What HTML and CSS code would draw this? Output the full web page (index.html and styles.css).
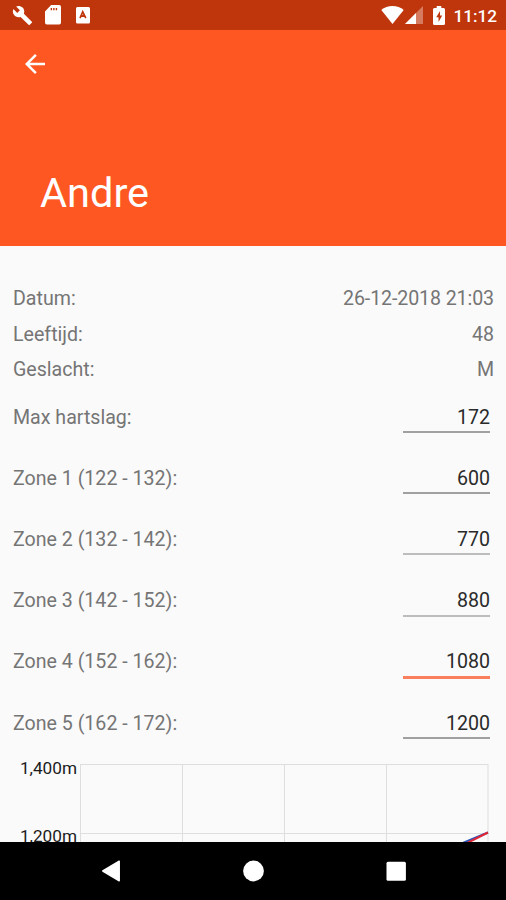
FILE: index.html
```html
<!DOCTYPE html>
<html lang="nl">
<head>
  <meta charset="UTF-8" />
  <title>Andre</title>
  <meta name="viewport" content="width=device-width, initial-scale=1" />
  <link rel="stylesheet" href="styles.css">
</head>
<body>
  <div class="status-bar">
    <svg class="icon-wrench" width="21" height="21" viewBox="0 0 24 24"><path d="M22.7 19l-9.1-9.1c.9-2.3.4-5-1.5-6.9-2-2-5-2.4-7.4-1.3L9 6 6 9 1.6 4.7C.4 7.1.9 10.1 2.9 12.1c1.9 1.9 4.6 2.4 6.9 1.5l9.1 9.1c.4.4 1 .4 1.4 0l2.3-2.3c.5-.4.5-1.1.1-1.4z"/></svg>
    <svg class="icon-card" width="16" height="20" viewBox="0 0 17 20" preserveAspectRatio="none"><path fill-rule="evenodd" d="M6.500 0H15a2 2 0 0 1 2 2v15.500a2 2 0 0 1-2 2H2a2 2 0 0 1-2-2V6.500zM6 3v2.200h1.500V3zm2.700 0v2.200h1.500V3zm2.700 0v2.200h1.500V3z"/></svg>
    <svg class="icon-app" width="14" height="17" viewBox="0 0 15 17" preserveAspectRatio="none"><rect width="15" height="16.500" rx="1.500"/><path class="cut" d="M4.300 11.200L7.200 4.800l3.300 6.400M5.500 9h3.700"/></svg>
    <div class="status-right">
      <svg class="icon-wifi" width="23" height="18" viewBox="0 0 24 18" preserveAspectRatio="none"><path d="M12 18L.3 3.900C3.500 1.400 7.500 0 12 0s8.500 1.400 11.700 3.900z"/></svg>
      <svg class="icon-signal" width="18" height="18" viewBox="0 0 18 18"><path d="M0 18L18 0v18z" opacity=".35"/><path d="M0 18L11 7v11z"/></svg>
      <svg class="icon-battery" width="12" height="19" viewBox="0 0 13 19" preserveAspectRatio="none"><path fill-rule="evenodd" d="M4 0h5v2h2.500A1.500 1.500 0 0 1 13 3.500v14a1.500 1.500 0 0 1-1.500 1.500h-10A1.500 1.500 0 0 1 0 17.500v-14A1.500 1.500 0 0 1 1.500 2H4zM7.600 5L3.500 11.300H6V16l4-6.400H7.600z"/></svg>
      <span class="clock">11:12</span>
    </div>
  </div>

  <header class="header">
    <svg class="back" width="30" height="30" viewBox="0 0 24 24"><path d="M20 11H7.830l5.590-5.590L12 4l-8 8 8 8 1.410-1.410L7.830 13H20z"/></svg>
    <h1>Andre</h1>
  </header>

  <main class="content">
    <div class="info-row"><span>Datum:</span><span class="date">26-12-2018 21:03</span></div>
    <div class="info-row"><span>Leeftijd:</span><span>48</span></div>
    <div class="info-row"><span>Geslacht:</span><span>M</span></div>

    <div class="edit-row"><label for="max">Max hartslag:</label><input type="text" id="max" value="172" /></div>
    <div class="edit-row"><label for="zone1">Zone 1 (122 - 132):</label><input type="text" id="zone1" value="600" /></div>
    <div class="edit-row"><label for="zone2">Zone 2 (132 - 142):</label><input type="text" id="zone2" class="light" value="770" /></div>
    <div class="edit-row"><label for="zone3">Zone 3 (142 - 152):</label><input type="text" id="zone3" class="light" value="880" /></div>
    <div class="edit-row"><label for="zone4">Zone 4 (152 - 162):</label><input type="text" id="zone4" class="active" value="1080" /></div>
    <div class="edit-row"><label for="zone5">Zone 5 (162 - 172):</label><input type="text" id="zone5" value="1200" /></div>

    <svg class="chart" width="506" height="342" viewBox="0 0 506 342">
      <g class="grid">
        <path d="M80 10.500H488M80 79.500H488"/>
        <path d="M80.500 10V342M182.500 10V342M284.500 10V342M386.500 10V342M488 10V342"/>
      </g>
      <text x="77" y="19.500">1,400m</text>
      <text x="77" y="88">1,200m</text>
      <path class="line-blue" d="M488 78.500L464 88.500L386 126"/>
      <path class="line-red" d="M488 78.500L386 130"/>
    </svg>
  </main>

  <nav class="nav-bar">
    <svg width="22" height="24" viewBox="0 0 22 24"><path d="M18.200 2.200v19.600L1.800 12z" stroke="#fff" stroke-width="1.500" stroke-linejoin="round"/></svg>
    <svg width="22" height="24" viewBox="0 0 22 24"><circle cx="10.500" cy="12" r="10.400"/></svg>
    <svg width="22" height="24" viewBox="0 0 22 24"><rect x="1.500" y="2.800" width="19.400" height="19" rx="1.500"/></svg>
  </nav>
</body>
</html>
```

FILE: styles.css
```css
:root {
  --bg: #fafafa;
  --primary: #ff5722;
  --primary-dark: #bf360c;
  --label: #757575;
  --text: #2a2a2a;
}

* { box-sizing: border-box; }

body {
  font-family: Roboto, sans-serif;
  margin: 0;
  height: 900px;
  overflow: hidden;
  display: flex;
  flex-direction: column;
  background-color: var(--bg);
  color: var(--text);
  font-size: 19.6px;
}

svg {
  display: block;
  flex: none;
  fill: #fff;
}

.status-bar {
  flex: none;
  height: 30px;
  padding: 0 9px 0 12px;
  display: flex;
  align-items: center;
  background-color: var(--primary-dark);
}

.icon-card { margin-left: 12px; }
.icon-app { margin-left: 15px; }

.cut {
  fill: none;
  stroke: var(--primary-dark);
  stroke-width: 1.8;
}

.status-right {
  margin-left: auto;
  display: flex;
  align-items: center;
}

.icon-signal { margin-left: 1px; }
.icon-battery { margin-left: 10px; }

.clock {
  margin-left: 8px;
  color: #fff;
  font-size: 17.2px;
  font-weight: 500;
  line-height: 30px;
  padding-top: 1px;
}

.header {
  flex: none;
  height: 216px;
  padding: 19px 20px 0;
  background-color: var(--primary);
  color: #fff;
}

.header h1 {
  margin: 89px 0 0 20px;
  font-size: 41.5px;
  font-weight: 400;
  line-height: 50px;
}

.content {
  flex: 1;
  min-height: 0;
  overflow: hidden;
  padding-top: 34px;
}

.info-row,
.edit-row {
  display: flex;
  justify-content: space-between;
  align-items: center;
  padding: 0 12px 0 13px;
  color: var(--label);
}

.info-row {
  height: 35.5px;
  padding-top: 1.5px;
}

.date { letter-spacing: -0.1px; }

.edit-row {
  height: 61.2px;
  padding-right: 16px;
}

.edit-row input {
  width: 87px;
  height: 32px;
  padding: 0;
  border: 0 solid transparent;
  border-width: 2px 0;
  border-bottom-color: #a0a0a0;
  background: none;
  color: var(--text);
  font: inherit;
  text-align: right;
  outline: none;
}

.edit-row input.light { border-bottom-color: #bdbdbd; }

.edit-row input.active {
  height: 34px;
  border-width: 3px 0;
  border-bottom-color: #fa7f5f;
}

.chart text {
  fill: #1c1c1c;
  font-size: 17.2px;
  text-anchor: end;
}

.chart path { fill: none; }
.grid path { stroke: #dedede; }

.chart .line-blue { stroke: #2a56b8; stroke-width: 2; }
.chart .line-red { stroke: #e02535; stroke-width: 2; }

.nav-bar {
  flex: none;
  height: 58px;
  padding: 0 99px 0 101px;
  display: flex;
  justify-content: space-between;
  align-items: center;
  background-color: #000;
}
```
